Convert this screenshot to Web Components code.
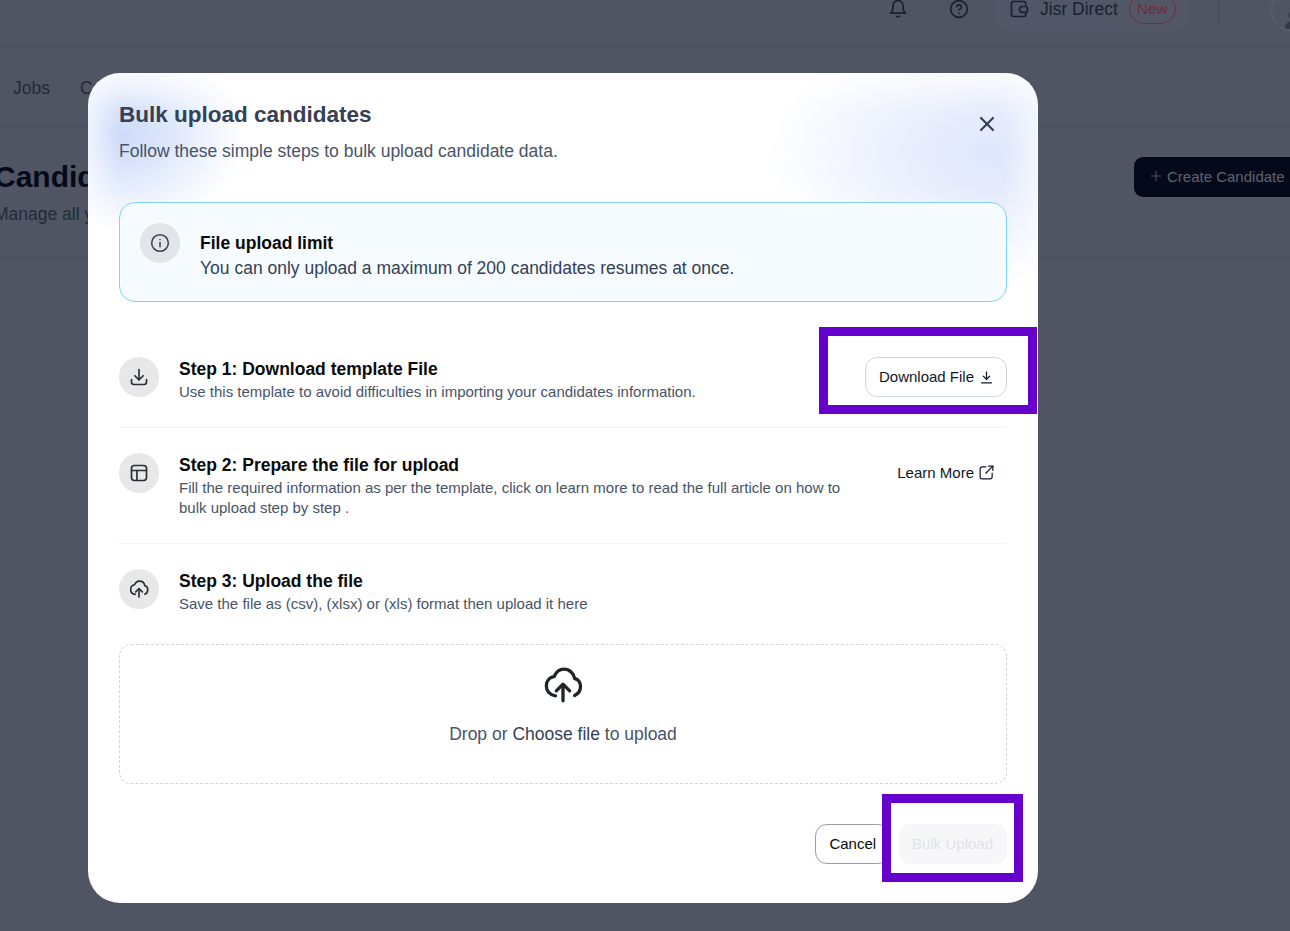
<!DOCTYPE html>
<html lang="en">
<head>
<meta charset="utf-8">
<title>Bulk upload candidates</title>
<style>
  html, body { margin: 0; height: 100%; overflow: hidden; background: #4f5563; }
  body { font-family: "Liberation Sans", Arial, sans-serif; }
</style>
</head>
<body>
<page-behind></page-behind>

<upload-modal>
  <info-note slot="note" heading="File upload limit">You can only upload a maximum of 200 candidates resumes at once.</info-note>

  <upload-step slot="steps" heading="Step 1: Download template File" icon="tray">
    Use this template to avoid difficulties in importing your candidates information.
    <app-button slot="action" kind="outline" icon="down">Download File</app-button>
  </upload-step>
  <upload-step slot="steps" heading="Step 2: Prepare the file for upload" icon="table">
    Fill the required information as per the template, click on learn more to read the full article on how to bulk upload step by step .
    <app-button slot="action" kind="plain" icon="external">Learn More</app-button>
  </upload-step>
  <upload-step slot="steps" heading="Step 3: Upload the file" icon="cloud" last>
    Save the file as (csv), (xlsx) or (xls) format then upload it here
  </upload-step>

  <drop-zone slot="drop"></drop-zone>

  <app-button slot="footer" kind="cancel">Cancel</app-button>
  <app-button slot="footer" kind="disabled">Bulk Upload</app-button>
</upload-modal>

<mark-box style="left:819px;top:327px;width:218px;height:87px"></mark-box>
<mark-box style="left:882px;top:794px;width:141px;height:88px"></mark-box>

<script>
const ICONS = {
  bell: '<path d="M6 8a6 6 0 0 1 12 0c0 7 3 9 3 9H3s3-2 3-9"/><path d="M10 21h4"/>',
  help: '<circle cx="12" cy="12" r="10"/><path d="M9.1 9a3 3 0 0 1 5.8 1c0 2-3 3-3 3"/><path d="M12 17h.01"/>',
  wallet: '<path d="M20 7V5a2 2 0 0 0-2-2H5a2 2 0 0 0-2 2v14a2 2 0 0 0 2 2h13a2 2 0 0 0 2-2v-2"/><path d="M16 9h5a1 1 0 0 1 1 1v5a1 1 0 0 1-1 1h-5a3.5 3.5 0 0 1 0-7z"/>',
  close: '<path d="M6 6l12 12"/><path d="M18 6L6 18"/>',
  info: '<circle cx="12" cy="12" r="10"/><path d="M12 16.500v-5"/><path d="M12 7.800h.01"/>',
  tray: '<path d="M12 3v12"/><path d="M7 10.500l5 5 5-5"/><path d="M3 15v3a3 3 0 0 0 3 3h12a3 3 0 0 0 3-3v-3"/>',
  table: '<rect x="3" y="3" width="18" height="18" rx="3.500"/><path d="M3 9h18"/><path d="M9.500 9v12"/>',
  cloud: '<path d="M7.500 18.500C4 18 2 15.500 2 12.500 2 9.500 4 7.300 6.700 6.900 8 4 10 2.500 12.500 2.500c3.500 0 6 2.500 6.500 5.600 2.500.5 3.500 2.800 3.500 4.700 0 2.500-1.300 4.500-3.500 5.500"/><path d="M12 21.500V12"/><path d="M8 15.500l4-4 4 4"/>',
  down: '<path d="M12 3v12"/><path d="M7 10l5 5 5-5"/><path d="M4 20.500h16"/>',
  external: '<path d="M11 4H6a3 3 0 0 0-3 3v11a3 3 0 0 0 3 3h11a3 3 0 0 0 3-3v-5"/><path d="M15 3h6v6"/><path d="M21 3L11 13"/>',
  plus: '<path d="M12 4v16"/><path d="M4 12h16"/>',
  person: '<circle cx="12" cy="8" r="5" fill="currentColor" stroke="none"/><path d="M3 23c0-6 4-9 9-9s9 3 9 9z" fill="currentColor" stroke="none"/>'
};

class XIcon extends HTMLElement {
  constructor() {
    super();
    this.root = this.attachShadow({ mode: 'open' });
  }

  connectedCallback() {
    const size = this.getAttribute('size') || 20;
    const stroke = this.getAttribute('stroke') || 2;
    this.root.innerHTML = `
      <style>
        :host { display: inline-flex; flex: none; line-height: 0; }
      </style>
      <svg width="${size}" height="${size}" viewBox="0 0 24 24" fill="none" stroke="currentColor"
           stroke-width="${stroke}" stroke-linecap="round" stroke-linejoin="round">${ICONS[this.getAttribute('name')]}</svg>`;
  }
}
customElements.define('x-icon', XIcon);

const pageTemplate = document.createElement('template');
pageTemplate.innerHTML = /*html*/ `
  <style>
    :host { display: block; width: 1290px; height: 931px; overflow: hidden; background: #4f5563; color: #242a38; font-size: 17.500px; }
    .top { height: 47px; box-sizing: border-box; border-bottom: 1px solid #474d5b; display: flex; justify-content: flex-end; overflow: hidden; }
    .top-in { display: flex; align-items: center; height: 36px; margin-top: -9px; }
    .bell { margin-right: 41px; color: #1a2030; }
    .help { margin-right: 26px; color: #1a2030; }
    .direct { display: flex; align-items: center; gap: 11px; width: 193px; height: 38px; box-sizing: border-box; padding: 0 0 0 14px; border-radius: 8px; background: #515766; margin-right: 30px; color: #1a2030; }
    .new { border: 1px solid #742b38; color: #742b38; border-radius: 15px; height: 28px; line-height: 28px; padding: 0 7px; font-size: 15.500px; }
    .sep { width: 1px; height: 36px; background: #474d5b; margin-right: 52px; }
    .avatar { width: 42px; height: 42px; border: 1px solid #5c6270; border-radius: 50%; margin-right: -25px; flex: none; color: #333a4a; display: flex; justify-content: center; align-items: flex-end; overflow: hidden; }
    .nav { height: 80px; box-sizing: border-box; padding: 4px 0 0 13px; border-bottom: 1px solid #474d5b; display: flex; align-items: center; gap: 30px; }
    .head { height: 131px; box-sizing: border-box; border-bottom: 1px solid #474d5b; display: flex; justify-content: space-between; padding-top: 30px; }
    h1 { margin: 0 0 5px -6px; font-size: 30px; line-height: 40px; color: #040a1a; font-weight: 700; }
    .head p { margin: 0 0 0 -6px; line-height: 24px; }
    .create { display: flex; align-items: center; gap: 4px; height: 40px; width: 156px; flex: none; box-sizing: border-box; padding: 0 0 2px 15px; background: #040a1a; border-radius: 9px 0 0 9px; color: #5f6470; font-size: 15px; white-space: nowrap; }
  </style>
  <div class="top">
    <div class="top-in">
      <x-icon class="bell" name="bell" size="20"></x-icon>
      <x-icon class="help" name="help" size="20"></x-icon>
      <div class="direct"><x-icon name="wallet" size="20"></x-icon><span>Jisr Direct</span><span class="new">New</span></div>
      <div class="sep"></div>
      <div class="avatar"><x-icon name="person" size="22"></x-icon></div>
    </div>
  </div>
  <div class="nav"><span>Jobs</span><span>Candidates</span></div>
  <div class="head">
    <div>
      <h1>Candidates</h1>
      <p>Manage all your candidates</p>
    </div>
    <div class="create"><x-icon name="plus" size="14" stroke="1.500"></x-icon>Create Candidate</div>
  </div>
`;

class PageBehind extends HTMLElement {
  constructor() {
    super();
    this.root = this.attachShadow({ mode: 'open' });
    this.root.appendChild(pageTemplate.content.cloneNode(true));
  }
}
customElements.define('page-behind', PageBehind);

const modalTemplate = document.createElement('template');
modalTemplate.innerHTML = /*html*/ `
  <style>
    :host { display: block; position: absolute; left: 88px; top: 73px; width: 950px; height: 830px; box-sizing: border-box; padding: 25px 31px 0; border-radius: 32px; color: #101828;
      background:
        linear-gradient(to left, rgba(255,255,255,.55), rgba(255,255,255,0) 36px),
        linear-gradient(to right, rgba(255,255,255,.6), rgba(255,255,255,0) 30px),
        linear-gradient(to bottom, rgba(255,255,255,.6), rgba(255,255,255,0) 36px),
        radial-gradient(ellipse 125px 95px at 32px 62px, #cddbfa 0%, rgba(205,219,250,.75) 32%, rgba(205,219,250,0) 100%),
        radial-gradient(ellipse 235px 130px at 912px 80px, #dfe7fb 0%, rgba(223,231,251,.8) 30%, rgba(223,231,251,0) 100%),
        #fff; }
    .head { position: relative; }
    h2 { margin: 0; font-size: 22.500px; line-height: 33px; font-weight: 700; color: #344054; }
    p { margin: 7px 0 0; font-size: 17.500px; line-height: 27px; color: #475467; }
    button { position: absolute; right: 8px; top: 14px; width: 24px; height: 24px; padding: 0; border: 0; background: none; color: #344054; line-height: 0; }
    .note { margin-top: 37px; }
    .foot { display: flex; justify-content: flex-end; gap: 9px; margin-top: 40px; }
  </style>
  <div class="head">
    <h2>Bulk upload candidates</h2>
    <p>Follow these simple steps to bulk upload candidate data.</p>
    <button><x-icon name="close" size="24" stroke="2.200"></x-icon></button>
  </div>
  <div class="note"><slot name="note"></slot></div>
  <slot name="steps"></slot>
  <slot name="drop"></slot>
  <div class="foot"><slot name="footer"></slot></div>
`;

class UploadModal extends HTMLElement {
  constructor() {
    super();
    this.root = this.attachShadow({ mode: 'open' });
    this.root.appendChild(modalTemplate.content.cloneNode(true));
  }
}
customElements.define('upload-modal', UploadModal);

const noteTemplate = document.createElement('template');
noteTemplate.innerHTML = /*html*/ `
  <style>
    :host { display: flex; gap: 20px; height: 100px; box-sizing: border-box; padding: 20px; border: 1px solid #7dd3fc; border-radius: 16px; background: #f5fbff; margin-bottom: 55px; }
    .dot { width: 40px; height: 40px; border-radius: 50%; background: #e2e4e7; color: #344054; display: flex; align-items: center; justify-content: center; flex: none; }
    .text { padding-top: 8px; font-size: 17.500px; line-height: 25px; color: #344054; }
    b { display: block; color: #0a0a0a; }
  </style>
  <div class="dot"><x-icon name="info" size="20" stroke="1.800"></x-icon></div>
  <div class="text"><b id="heading"></b><slot></slot></div>
`;

class InfoNote extends HTMLElement {
  constructor() {
    super();
    this.root = this.attachShadow({ mode: 'open' });
    this.root.appendChild(noteTemplate.content.cloneNode(true));
    this.root.querySelector('#heading').innerText = this.getAttribute('heading');
  }
}
customElements.define('info-note', InfoNote);

const stepTemplate = document.createElement('template');
stepTemplate.innerHTML = /*html*/ `
  <style>
    :host { display: flex; gap: 20px; padding-bottom: 25px; margin-bottom: 25px; border-bottom: 1px solid #f2f4f7; }
    :host([last]) { padding-bottom: 0; margin-bottom: 0; border-bottom: 0; }
    .dot { width: 40px; height: 40px; border-radius: 50%; background: #e8e8e8; color: #2b2f36; display: flex; align-items: center; justify-content: center; flex: none; }
    .text { flex: 1; min-width: 0; }
    .title { font-size: 17.500px; line-height: 24px; font-weight: 700; color: #0a0a0a; }
    .desc { margin-top: 1px; font-size: 15px; line-height: 20px; color: #475467; }
    .action { flex: none; }
  </style>
  <div class="dot"><x-icon id="icon" size="20"></x-icon></div>
  <div class="text">
    <div class="title" id="title"></div>
    <div class="desc"><slot></slot></div>
  </div>
  <div class="action"><slot name="action"></slot></div>
`;

class UploadStep extends HTMLElement {
  constructor() {
    super();
    this.root = this.attachShadow({ mode: 'open' });
    const content = stepTemplate.content.cloneNode(true);
    content.querySelector('#title').innerText = this.getAttribute('heading');
    content.querySelector('#icon').setAttribute('name', this.getAttribute('icon'));
    this.root.appendChild(content);
  }
}
customElements.define('upload-step', UploadStep);

const buttonTemplate = document.createElement('template');
buttonTemplate.innerHTML = /*html*/ `
  <style>
    :host { display: inline-flex; align-items: center; height: 40px; box-sizing: border-box; padding: 0 14px 2px 13px; border-radius: 12px; font-size: 15px; color: #101828; white-space: nowrap; }
    :host([kind="outline"]) { border: 1px solid #d0d5dd; background: #fff; gap: 5px; padding: 0 12px 2px 13px; }
    :host([kind="cancel"]) { border: 1px solid #9b9ba3; background: #fff; color: #0a0a0a; padding: 0 13px 2px 13px; }
    :host([kind="disabled"]) { background: #f7f7f9; color: #e1e2ea; }
    :host([kind="plain"]) { gap: 4px; padding: 0 12px 2px 14px; }
    x-icon { margin-top: 2px; }
    :host([kind="plain"]) x-icon { margin-top: 0; }
  </style>
  <slot></slot><x-icon id="icon"></x-icon>
`;

class AppButton extends HTMLElement {
  constructor() {
    super();
    this.root = this.attachShadow({ mode: 'open' });
    const content = buttonTemplate.content.cloneNode(true);
    const name = this.getAttribute('icon');
    const icon = content.querySelector('#icon');
    if (name) {
      icon.setAttribute('name', name);
      icon.setAttribute('size', name === 'down' ? '15' : '17');
      if (name === 'external') icon.setAttribute('stroke', '1.700');
    } else {
      icon.remove();
    }
    this.root.appendChild(content);
  }
}
customElements.define('app-button', AppButton);

const dropTemplate = document.createElement('template');
dropTemplate.innerHTML = /*html*/ `
  <style>
    :host { display: flex; flex-direction: column; align-items: center; height: 140px; box-sizing: border-box; margin-top: 30px; padding-top: 20px; border: 1px dashed #d0d5dd; border-radius: 12px; background: #fff; color: #202428; }
    span { margin-top: 15px; font-size: 17.500px; line-height: 28px; color: #475467; }
    em { font-style: normal; color: #344054; }
  </style>
  <x-icon name="cloud" size="40" stroke="2"></x-icon>
  <span>Drop or <em>Choose file</em> to upload</span>
`;

class DropZone extends HTMLElement {
  constructor() {
    super();
    this.root = this.attachShadow({ mode: 'open' });
    this.root.appendChild(dropTemplate.content.cloneNode(true));
  }
}
customElements.define('drop-zone', DropZone);

class MarkBox extends HTMLElement {
  constructor() {
    super();
    this.root = this.attachShadow({ mode: 'open' });
    this.root.innerHTML = `
      <style>
        :host { display: block; position: absolute; box-sizing: border-box; border: 9px solid #6600cc; pointer-events: none; }
      </style>`;
  }
}
customElements.define('mark-box', MarkBox);
</script>
</body>
</html>
